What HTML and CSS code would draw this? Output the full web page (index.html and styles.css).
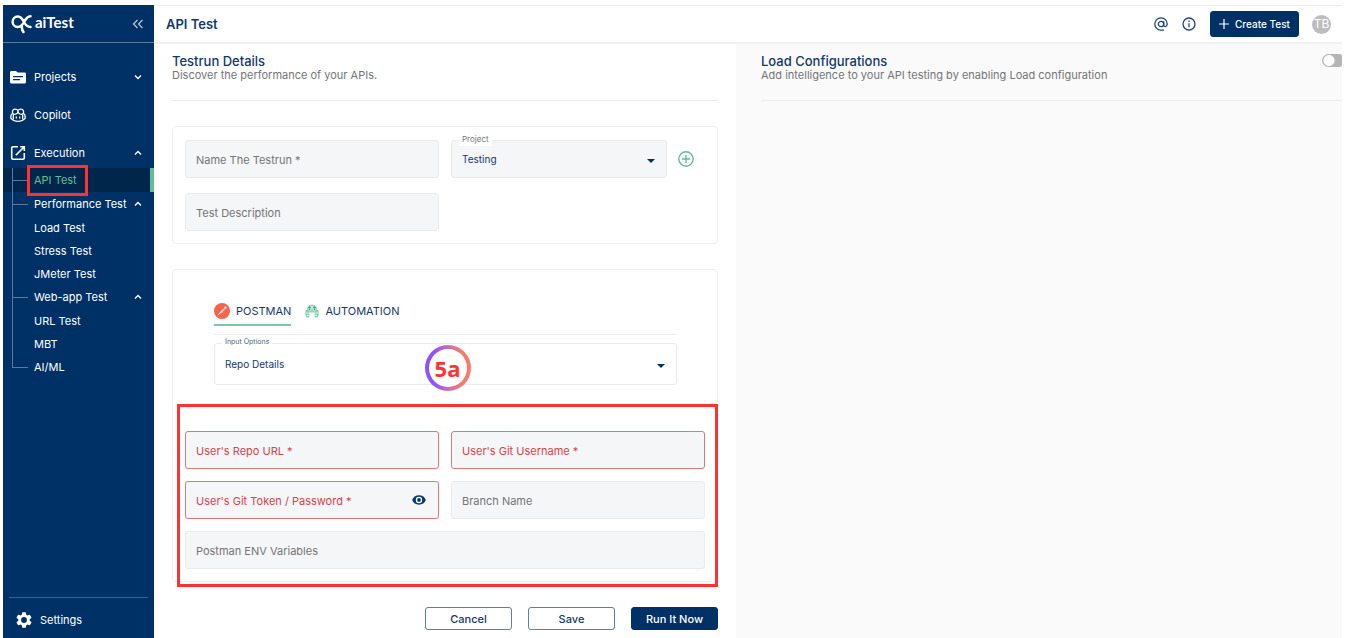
FILE: index.html
```html
<!DOCTYPE html>
<html lang="en">
<head>
<meta charset="utf-8">
<meta name="viewport" content="width=device-width, initial-scale=1">
<title>aiTest - API Test</title>
<link rel="stylesheet" href="styles.css">
</head>
<body>
<div class="app">
  <aside class="sidebar">
    <div class="brand">
      <svg class="brand-mark" viewBox="0 0 22 20" width="22" height="20" fill="none" stroke="#fff" stroke-width="2.5" stroke-linecap="round" stroke-linejoin="round"><path d="M19.500 2.200C16.500 2.200 15 4.500 13 8C11.500 10.800 9.800 13 6.800 13C3.800 13 1.600 10.700 1.600 7.800S3.800 2.600 6.800 2.600C9.500 2.600 11.300 4.500 13 8C14.300 10.500 15.800 13 19.500 13M10.800 12C10.800 15 11 16.500 12.500 18"/></svg>
      <span class="brand-name">aiTest</span>
      <button class="icon-btn collapse" type="button" aria-label="Collapse menu">
        <svg viewBox="0 0 12 10" width="12" height="10" fill="none" stroke="#b9c8da" stroke-width="1.2"><path d="M5.500 1L1.500 5l4 4M10.500 1l-4 4 4 4"/></svg>
      </button>
    </div>
    <nav class="nav">
      <a class="nav-item" href="#">
        <svg viewBox="0 0 16 14" width="16" height="14"><path fill="#fff" fill-rule="evenodd" d="M1.500 1H6l1.600 1.600h6.900c.8 0 1.500.6 1.500 1.400v8c0 .8-.7 1.500-1.500 1.500h-13C.7 13.500 0 12.800 0 12V2.500C0 1.700.7 1 1.500 1zM3 6v1.300h10V6zM3 9v1.300h7V9z"/></svg>
        <span class="nav-label">Projects</span>
        <svg class="caret" viewBox="0 0 8 6" width="8" height="6"><path d="M1 1.500l3 3 3-3"/></svg>
      </a>
      <a class="nav-item" href="#">
        <svg viewBox="0 0 16 14" width="16" height="14" fill="none" stroke="#fff" stroke-width="1.300"><path d="M8 2.500C6.800.8 3.200.6 2.600 2.800c-.4 1.700 0 3.400 1.800 3.500C6.800 6.400 8 5 8 2.500zC9.200.8 12.800.6 13.400 2.800c.4 1.700 0 3.400-1.800 3.500C9.200 6.400 8 5 8 2.500z"/><path d="M2.600 5.300C1.200 6.300.8 7.300.8 8.800v1.400c1.500 2 4.300 3.100 7.200 3.100s5.700-1.100 7.200-3.100V8.800c0-1.500-.4-2.500-1.800-3.500"/><path d="M3.300 6.500v5M12.700 6.500v5M6.300 8.500v2M9.700 8.500v2"/></svg>
        <span class="nav-label">Copilot</span>
      </a>
      <a class="nav-item" href="#">
        <svg viewBox="0 0 16 16" width="16" height="16" fill="none" stroke="#fff" stroke-width="1.600"><path d="M8 1.800H3c-.8 0-1.300.5-1.300 1.300v10c0 .8.5 1.200 1.300 1.200h10c.8 0 1.300-.4 1.300-1.200V8M10.200 1.800h4.100v4.100M14 2L5.800 10.200"/></svg>
        <span class="nav-label">Execution</span>
        <svg class="caret" viewBox="0 0 8 6" width="8" height="6"><path d="M1 4.500l3-3 3 3"/></svg>
      </a>
      <ul class="tree">
        <li class="branch active"><a href="#">API Test</a><span class="mark-nav"></span></li>
        <li class="branch"><a href="#">Performance Test<svg class="caret" viewBox="0 0 8 6" width="8" height="6"><path d="M1 4.500l3-3 3 3"/></svg></a></li>
        <li><a href="#">Load Test</a></li>
        <li><a href="#">Stress Test</a></li>
        <li><a href="#">JMeter Test</a></li>
        <li class="branch"><a href="#">Web-app Test<svg class="caret" viewBox="0 0 8 6" width="8" height="6"><path d="M1 4.500l3-3 3 3"/></svg></a></li>
        <li><a href="#">URL Test</a></li>
        <li><a href="#">MBT</a></li>
        <li class="branch last"><a href="#">AI/ML</a></li>
      </ul>
    </nav>
    <a class="settings" href="#">
      <svg viewBox="2 2 20 20" width="16" height="16"><path fill="#fff" d="M19.140 12.940c.04-.3.06-.61.06-.94s-.02-.64-.07-.94l2.030-1.580a.49.49 0 0 0 .12-.61l-1.920-3.320a.49.49 0 0 0-.59-.22l-2.390.96a7 7 0 0 0-1.620-.94l-.36-2.540A.48.48 0 0 0 13.920 2.400h-3.840a.48.48 0 0 0-.47.41l-.36 2.540a7.400 7.400 0 0 0-1.620.94l-2.390-.96a.48.48 0 0 0-.59.22L2.740 8.870a.48.48 0 0 0 .12.61l2.030 1.580a6 6 0 0 0 0 1.880l-2.030 1.580a.49.49 0 0 0-.12.610l1.920 3.320c.12.220.37.290.59.220l2.390-.96c.5.380 1.030.700 1.620.940l.36 2.540c.05.240.24.410.48.410h3.840c.24 0 .44-.17.470-.41l.36-2.540a7 7 0 0 0 1.620-.94l2.390.96c.22.080.47 0 .59-.22l1.920-3.320a.48.48 0 0 0-.12-.61zM12 15.600a3.600 3.600 0 1 1 0-7.200 3.600 3.600 0 0 1 0 7.200z"/></svg>
      <span>Settings</span>
    </a>
  </aside>

  <div class="main">
    <header class="topbar">
      <h1>API Test</h1>
      <button class="icon-btn" type="button" aria-label="Mentions">
        <svg viewBox="0 0 14 14" width="14" height="14" fill="none" stroke="#1d4777" stroke-width="1.300"><circle cx="7" cy="7" r="2.700"/><path d="M9.700 4.300V8c0 2.400 3.500 2.200 3.500-1A6.200 6.200 0 1 0 7 13.200h3"/></svg>
      </button>
      <button class="icon-btn" type="button" aria-label="Information">
        <svg viewBox="0 0 14 14" width="14" height="14" fill="none" stroke="#1d4777" stroke-width="1.300"><circle cx="7" cy="7" r="6"/><path d="M7 6.200v4M7 3.600v1.400"/></svg>
      </button>
      <button class="btn primary create" type="button">
        <svg viewBox="0 0 10 10" width="10" height="10" stroke="#fff" stroke-width="1.200"><path d="M5 0v10M0 5h10"/></svg>
        Create Test
      </button>
      <span class="avatar">TB</span>
    </header>

    <div class="columns">
      <main class="details">
        <div class="section-head">
          <h2>Testrun Details</h2>
          <p>Discover the performance of your APIs.</p>
        </div>

        <form class="form">
          <section class="card grid">
            <div class="field">
              <label for="run-name">Name The Testrun *</label>
              <input id="run-name" type="text">
            </div>
            <div class="project">
              <div class="field select">
                <label for="project">Project</label>
                <select id="project"><option>Testing</option></select>
              </div>
              <button class="icon-btn" type="button" aria-label="Add project">
                <svg viewBox="0 0 16 16" width="16" height="16" fill="none" stroke="#62bd94" stroke-width="1.400"><circle cx="8" cy="8" r="7.200"/><path d="M8 4v8M4 8h8"/></svg>
              </button>
            </div>
            <div class="field">
              <label for="run-desc">Test Description</label>
              <input id="run-desc" type="text">
            </div>
          </section>

          <section class="card source">
            <div class="source-head">
              <div class="tabs" role="tablist">
                <button class="tab selected" type="button" role="tab" aria-selected="true">
                  <svg viewBox="0 0 16 16" width="16" height="16"><circle cx="8" cy="8" r="8" fill="#f8634c"/><path d="M4 12l2.500-3.500L10 5l1.500-.8.4 1.200-3.400 4z" fill="#fbb5a8"/><path d="M4 12l6-6.500" stroke="#fff" stroke-width=".8"/><circle cx="11.500" cy="4.500" r="1.300" fill="#ffd9d2"/></svg>
                  POSTMAN
                </button>
                <button class="tab" type="button" role="tab" aria-selected="false">
                  <svg viewBox="0 0 14 14" width="14" height="14"><path d="M1.500 6.500C1.500 2.500 4 .5 7 .5s5.500 2 5.500 6z" fill="#a5dcc4"/><path d="M4.500 2v4M9.500 2v4M3 3.500h8" stroke="#5d9f88" stroke-width=".9"/><path d="M6 3h2v1H6z" fill="#fff"/><path d="M.4 6h4v7.500H1.500L.4 11zM9.600 6h4v5l-1.100 2.500H9.600z" fill="#8ccfb3"/><path d="M4.500 6.500h5v2h-5z" fill="#8ccfb3"/><path d="M1 9h3M10 9h3M2 11.500h2M10 11.500h2" stroke="#fff" stroke-width=".7"/></svg>
                  AUTOMATION
                </button>
              </div>
              <div class="field select outlined">
                <label for="input-options">Input Options</label>
                <select id="input-options"><option>Repo Details</option></select>
                <span class="step">5a</span>
              </div>
            </div>
            <div class="grid repo">
              <div class="field error">
                <label for="repo-url">User's Repo URL *</label>
                <input id="repo-url" type="text" required>
              </div>
              <div class="field error">
                <label for="git-user">User's Git Username *</label>
                <input id="git-user" type="text" required>
              </div>
              <div class="field error">
                <label for="git-token">User's Git Token / Password *</label>
                <input id="git-token" type="password" required>
                <button class="icon-btn eye" type="button" aria-label="Show password">
                  <svg viewBox="0 0 14 10" width="14" height="10"><path fill="#0b376b" d="M7 .3C3.800.3 1.200 2.200.2 5c1 2.800 3.600 4.700 6.800 4.700S12.800 7.800 13.800 5C12.800 2.200 10.200.3 7 .3z"/><circle cx="7" cy="5" r="3.200" fill="#fff"/><circle cx="7" cy="5" r="1.900" fill="#0b376b"/></svg>
                </button>
              </div>
              <div class="field">
                <label for="branch">Branch Name</label>
                <input id="branch" type="text">
              </div>
              <div class="field wide">
                <label for="env">Postman ENV Variables</label>
                <input id="env" type="text">
              </div>
              <span class="mark-form"></span>
            </div>
          </section>

          <div class="actions">
            <button class="btn" type="button">Cancel</button>
            <button class="btn" type="button">Save</button>
            <button class="btn primary" type="button">Run It Now</button>
          </div>
        </form>
      </main>

      <section class="load">
        <div class="section-head">
          <h2><label for="load-toggle">Load Configurations</label></h2>
          <p>Add intelligence to your API testing by enabling Load configuration</p>
          <input class="toggle" id="load-toggle" type="checkbox" role="switch">
        </div>
      </section>
    </div>
  </div>
</div>
</body>
</html>
```
FILE: styles.css
```css
* { box-sizing: border-box; }

body {
  margin: 0;
  background: #fff;
  color: #12396b;
  font-family: Inter, "Liberation Sans", sans-serif;
  font-size: 11px;
  line-height: 14px;
}

a { color: inherit; text-decoration: none; }
h1, h2, p, ul { margin: 0; padding: 0; }
svg { display: block; flex: none; }
button, input, select { font: inherit; color: inherit; }

.app {
  display: flex;
  min-height: 100vh;
  padding: 5px 7px 0 3px;
}

/* Sidebar */
.sidebar {
  display: flex;
  flex-direction: column;
  flex: none;
  width: 151px;
  background: #003166;
  color: #fff;
}

.brand {
  display: flex;
  align-items: center;
  height: 38px;
  padding: 0 10px 0 8px;
  border-bottom: 1px solid #5b7a9c;
}

.brand-name {
  margin-left: 2px;
  padding-bottom: 4px;
  font-family: Lato, sans-serif;
  font-size: 15px;
  font-weight: 700;
}

.icon-btn {
  display: grid;
  place-items: center;
  flex: none;
  padding: 0;
  border: 0;
  background: none;
  cursor: pointer;
}

.collapse { margin-left: auto; }

.nav { flex: 1; padding-top: 15px; }

.nav-item {
  display: flex;
  align-items: center;
  gap: 8px;
  height: 38px;
  padding: 0 12px 0 7px;
}

.caret {
  margin-left: auto;
  fill: none;
  stroke: #fff;
  stroke-width: 1.3;
}

.tree {
  margin-top: -4px;
  list-style: none;
}

.tree li {
  position: relative;
  padding-left: 31px;
}

.tree a {
  display: flex;
  align-items: center;
  height: 23px;
  padding-right: 12px;
}

.tree .branch a { height: 24px; }

.tree li::before {
  content: "";
  position: absolute;
  top: 0;
  bottom: 0;
  left: 9px;
  border-left: 1px solid #5b7a9c;
}

.tree .branch::after {
  content: "";
  position: absolute;
  top: 50%;
  left: 9px;
  width: 16px;
  border-top: 1px solid #5b7a9c;
}

.tree .last::before { bottom: 50%; }

.tree .active {
  background: #00264c;
  border-right: 4px solid #62bd94;
  color: #62bd94;
}

.mark-nav {
  position: absolute;
  z-index: 1;
  top: -3px;
  left: 24px;
  width: 61px;
  height: 31px;
  border: 3px solid #ff3131;
}

.settings {
  display: flex;
  align-items: center;
  gap: 8px;
  height: 41px;
  margin: 0 6px;
  padding: 4px 0 0 7px;
  border-top: 1px solid #3d6089;
}

/* Top bar */
.main {
  display: flex;
  flex-direction: column;
  flex: 1;
  min-width: 0;
  border-top: 1px solid #ececec;
}

.topbar {
  display: flex;
  align-items: center;
  gap: 14px;
  height: 38px;
  padding: 0 11px 0 12px;
  border-bottom: 2px solid #f1f1f1;
}

h1 {
  margin-right: auto;
  font-size: 13px;
  font-weight: 600;
}

.avatar {
  display: grid;
  place-items: center;
  width: 19px;
  height: 19px;
  margin-left: -1px;
  border-radius: 50%;
  background: #bdbdbd;
  color: #fff;
  font-size: 12px;
}

.btn {
  display: flex;
  align-items: center;
  justify-content: center;
  gap: 6px;
  width: 87px;
  height: 23px;
  padding: 0;
  border: 1px solid #5b7fa8;
  border-radius: 3px;
  background: #fff;
  font-weight: 500;
  cursor: pointer;
}

.btn.primary {
  border-color: #003166;
  background: #003166;
  color: #fff;
}

.btn.create {
  width: 89px;
  height: 26px;
  font-size: 10px;
}

/* Content */
.columns {
  display: grid;
  grid-template-columns: 582fr 606fr;
  flex: 1;
}

.details { padding: 0 18px 7px 18px; }

.load {
  padding-left: 25px;
  background: #fafafa;
}

.section-head {
  display: grid;
  grid-template-columns: 1fr auto;
  align-content: start;
  height: 57px;
  padding-top: 10px;
  border-bottom: 1px solid #ececec;
}

h2 {
  font-size: 13px;
  font-weight: 500;
  line-height: 14px;
}

.section-head p {
  grid-area: 2 / 1;
  color: #757575;
}

.toggle {
  grid-area: 1 / 2;
  appearance: none;
  width: 20px;
  height: 13px;
  margin: 0;
  border-radius: 7px 3px 3px 7px;
  background: radial-gradient(circle at 7px 50%, #fff 5px, #b5b5b5 6px);
}

.form {
  display: flex;
  flex-direction: column;
  gap: 25px;
  padding-top: 25px;
}

.card {
  padding: 13px 12px 12px;
  border: 1px solid #efefef;
  border-radius: 4px;
}

.grid {
  display: grid;
  grid-template-columns: 1fr 1fr;
  gap: 15px 12px;
}

.field {
  position: relative;
  display: grid;
  min-width: 0;
}

.field > label,
.field > input,
.field > select,
.field > .eye { grid-area: 1 / 1; }

.field > label {
  z-index: 1;
  align-self: center;
  justify-self: start;
  margin-left: 11px;
  padding-top: 2px;
  color: #757575;
  pointer-events: none;
}

.field > input,
.field > select {
  width: 100%;
  min-width: 0;
  height: 38px;
  padding: 0 10px;
  border: 1px solid #eaebec;
  border-radius: 3px;
  background: #f5f6f8;
}

.field.error > label { color: #d9434a; }
.field.error > input { border-color: #dd7778; }

.eye {
  z-index: 1;
  align-self: center;
  justify-self: end;
  margin-right: 13px;
}

.wide { grid-column: 1 / -1; }

.field.select > select { appearance: none; font-size: 10px; }

.field.select > label {
  align-self: start;
  margin: -8px 0 0 8px;
  padding: 0 3px;
  background: #fff;
  font-size: 8px;
}

.field.select::after {
  content: "";
  position: absolute;
  top: 50%;
  right: 12px;
  border: 4px solid transparent;
  border-top-color: #003166;
  border-bottom-width: 0;
}

.field.outlined > select { height: 42px; background: #fff; }
.field.outlined > label { color: #4a6587; font-size: 7px; }

.project {
  display: grid;
  grid-template-columns: 1fr 38px;
}

.source { position: relative; }

.source-head { padding: 15px 28px 0 29px; }

.tabs {
  display: flex;
  align-items: start;
  gap: 14px;
  height: 37px;
  margin-bottom: 8px;
  border-bottom: 1px solid #f1f1f1;
}

.tab {
  display: flex;
  align-items: center;
  gap: 6px;
  height: 28px;
  padding: 0;
  border: 0;
  border-bottom: 2px solid transparent;
  background: none;
  cursor: pointer;
}

.tab.selected { border-bottom-color: #7cc9aa; }

.step {
  position: absolute;
  z-index: 1;
  top: 2px;
  left: calc(50% - 21px);
  display: grid;
  place-items: center;
  width: 46px;
  height: 46px;
  border: 4px solid transparent;
  border-radius: 50%;
  background:
    linear-gradient(#fff, #fff) padding-box,
    linear-gradient(90deg, #8c52ff 20%, #c76fb0 50%, #f57b6b 80%) border-box;
  color: #ff3131;
  font-family: "Open Sans", sans-serif;
  font-size: 22px;
  font-weight: 700;
}

.repo {
  position: relative;
  row-gap: 12px;
  margin-top: 46px;
}

.mark-form {
  position: absolute;
  inset: -27px -13px -18px -8px;
  border: 3px solid #ff3131;
  pointer-events: none;
}

.actions {
  display: flex;
  justify-content: flex-end;
  gap: 16px;
}
```
